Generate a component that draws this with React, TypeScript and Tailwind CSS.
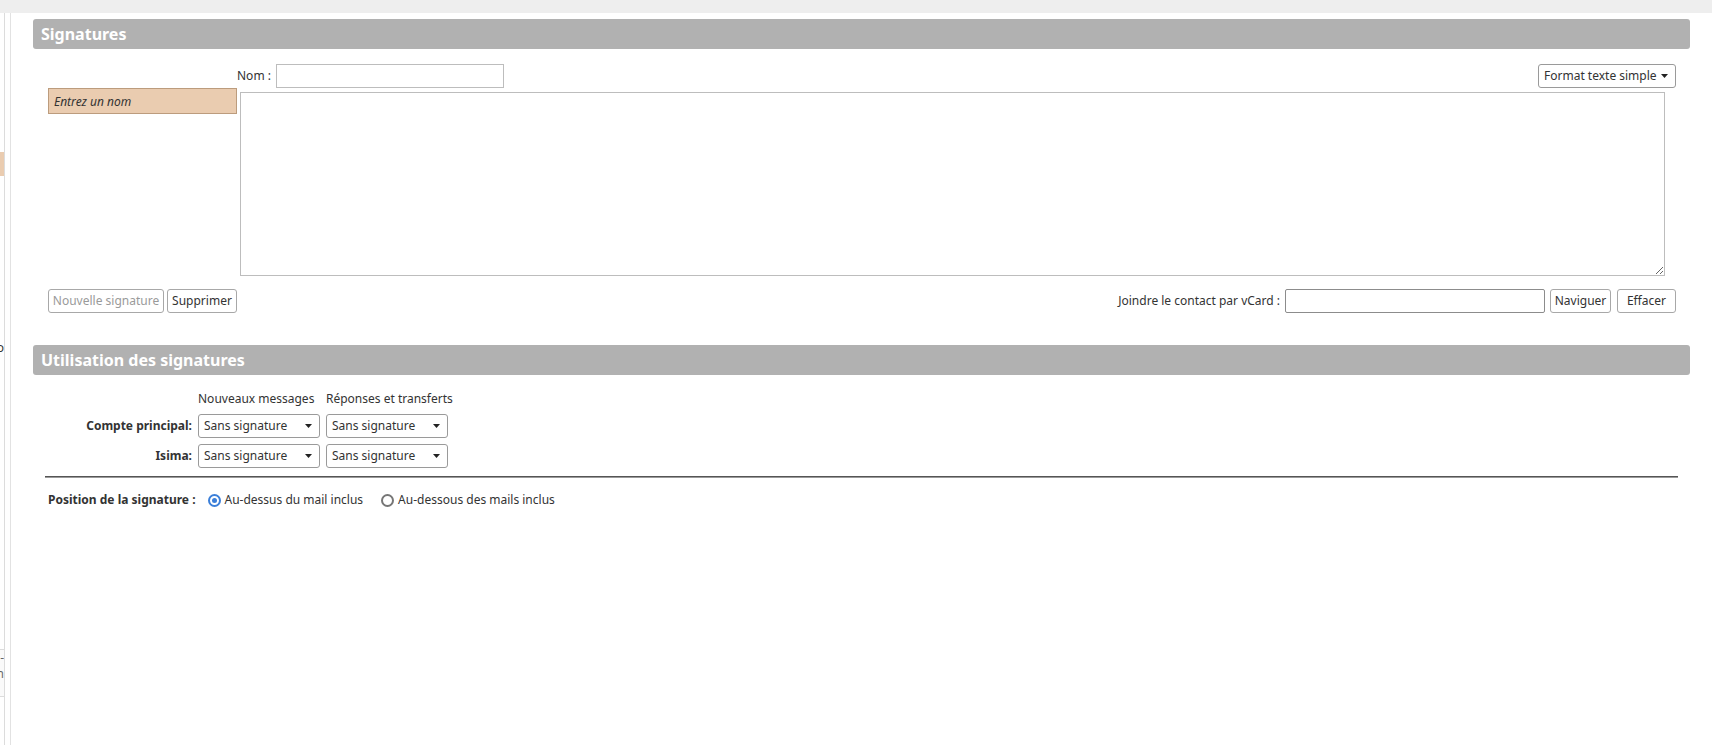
import {ReactNode} from 'react'

const FONT = {fontFamily: '"Noto Sans", "Open Sans", sans-serif'}

function SectionHeader({title}: {title: string}) {
  return (
    <div className="h-[30px] rounded-[3px] bg-[#b1b1b1] pl-[8px] flex items-center">
      <h2 className="text-[16px] font-bold text-white leading-none">{title}</h2>
    </div>
  )
}

function Button({children, disabled, className = ''}: {children: ReactNode; disabled?: boolean; className?: string}) {
  return (
    <button
      disabled={disabled}
      className={`h-[24px] rounded-[3px] border border-[#a8a8a8] bg-white text-[12px] leading-none whitespace-nowrap ${
        disabled ? 'text-[#9a9a9a]' : 'text-[#333]'
      } ${className}`}
    >
      {children}
    </button>
  )
}

function Select({label, className = ''}: {label: string; className?: string}) {
  return (
    <div
      className={`h-[24px] rounded-[3px] border border-[#9a9a9a] bg-white flex items-center justify-between pl-[5px] pr-[7px] text-[12px] text-[#333] whitespace-nowrap ${className}`}
    >
      <span>{label}</span>
      <svg width="7" height="4" viewBox="0 0 7 4">
        <path d="M0 0h7L3.5 4z" fill="#222" />
      </svg>
    </div>
  )
}

function Radio({checked, label}: {checked?: boolean; label: string}) {
  return (
    <label className="flex items-center gap-[4px] whitespace-nowrap">
      <span
        className={`w-[13px] h-[13px] rounded-full border-2 flex items-center justify-center ${
          checked ? 'border-[#3b7fd9]' : 'border-[#767676]'
        }`}
      >
        {checked && <span className="w-[5px] h-[5px] rounded-full bg-[#3b7fd9]" />}
      </span>
      <span>{label}</span>
    </label>
  )
}

function Sidebar() {
  return (
    <div className="w-[5px] border-r border-[#dcdcdc] overflow-hidden flex flex-col text-[12px] text-[#333]">
      <div className="h-[139px]" />
      <div className="h-[24px] bg-[#eaccb0]" />
      <div className="h-[166px]" />
      <div className="flex justify-end leading-none">o</div>
      <div className="h-[55px]" />
      <div className="flex justify-end leading-[4px] text-[#888]">⋮</div>
      <div className="h-[236px]" />
      <div className="h-[48px] border-t border-b border-[#dcdcdc] bg-[#fafafa] flex flex-col items-end text-[#666] leading-[16px]">
        <span>-</span>
        <span>n</span>
      </div>
    </div>
  )
}

export default function App() {
  return (
    <div className="w-[1712px] h-[745px] bg-white flex flex-col overflow-hidden text-[#333]" style={FONT}>
      <div className="h-[13px] bg-[#eeeeee] shrink-0" />
      <div className="flex flex-1">
        <Sidebar />
        <div className="w-[5px]" />
        <main className="flex-1 border-l border-[#e2e2e2] pl-[22px] pr-[22px] pt-[6px]">
          <section>
            <SectionHeader title="Signatures" />
            <div className="pl-[15px] pr-[14px]">
              <div className="mt-[15px] h-[24px] flex items-center">
                <div className="w-[189px]" />
                <span className="text-[12px] mr-[5px]">Nom :</span>
                <input className="w-[228px] h-[24px] border border-[#bdbdbd] bg-white outline-none" />
                <div className="flex-1" />
                <Select label="Format texte simple" className="w-[138px] pl-[4px]" />
              </div>
              <div className="flex gap-[3px]">
                <div className="w-[189px] h-[26px] bg-[#eaccb0] border border-[#bc9c7d] flex items-center pl-[5px] pt-[1px] text-[12px] italic text-[#333] self-start">
                  Entrez un nom
                </div>
                <textarea className="mt-[4px] flex-1 mr-[11px] h-[184px] border border-[#bdbdbd] resize-y outline-none" />
              </div>
              <div className="mt-[13px] flex items-center">
                <Button disabled className="w-[116px]">
                  Nouvelle signature
                </Button>
                <Button className="ml-[3px] w-[70px]">Supprimer</Button>
                <div className="flex-1" />
                <span className="text-[12px] mr-[5px]">Joindre le contact par vCard :</span>
                <input className="w-[260px] h-[24px] border border-[#8c8c8c] rounded-[2px] bg-white outline-none" />
                <Button className="ml-[5px] w-[61px]">Naviguer</Button>
                <Button className="ml-[6px] w-[59px]">Effacer</Button>
              </div>
            </div>
          </section>

          <section className="mt-[32px]">
            <SectionHeader title="Utilisation des signatures" />
            <div className="pl-[15px] pr-[14px]">
              <div className="mt-[16px] grid grid-cols-[144px_122px_122px] gap-x-[6px] gap-y-[6px] text-[12px] items-center">
                <div />
                <div className="h-[17px] leading-[16px] whitespace-nowrap">Nouveaux messages</div>
                <div className="h-[17px] leading-[16px] whitespace-nowrap">Réponses et transferts</div>
                <div className="text-right font-bold">Compte principal:</div>
                <Select label="Sans signature" />
                <Select label="Sans signature" />
                <div className="text-right font-bold">Isima:</div>
                <Select label="Sans signature" />
                <Select label="Sans signature" />
              </div>
              <div className="mt-[8px] -ml-[3px] -mr-[2px] h-[2px] border-t border-[#555] bg-[#9a9a9a]" />
              <div className="mt-[14px] flex items-center text-[12px] h-[16px]">
                <span className="font-bold mr-[12px]">Position de la signature :</span>
                <Radio checked label="Au-dessus du mail inclus" />
                <div className="w-[18px]" />
                <Radio label="Au-dessous des mails inclus" />
              </div>
            </div>
          </section>
        </main>
      </div>
    </div>
  )
}
